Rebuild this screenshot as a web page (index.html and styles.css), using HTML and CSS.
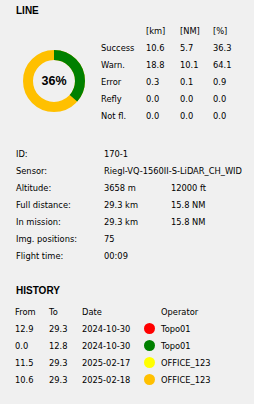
FILE: index.html
```html
<!DOCTYPE html>
<html lang="en">

<head>
    <meta charset="UTF-8">
    <meta name="viewport" content="width=device-width, initial-scale=1.0">
    <title>Line details</title>
    <link rel="stylesheet" href="styles.css">
</head>

<body>
    <div class="panel">
        <h2>LINE</h2>
        <div class="line-body">
            <div class="donut">
                <svg width="62" height="62" viewBox="0 0 62 62">
                    <g transform="rotate(-90 31 31)" fill="none" stroke-width="10">
                        <circle cx="31" cy="31" r="26" stroke="#ffc000"/>
                        <circle cx="31" cy="31" r="26" stroke="#008000" stroke-dasharray="59.3 200"/>
                        <circle cx="31" cy="31" r="26" stroke="#ff0000" stroke-dasharray="1.2 200" stroke-dashoffset="1.2"/>
                    </g>
                </svg>
                <span class="pct">36%</span>
            </div>
            <div class="stats">
                <span></span><span>[km]</span><span>[NM]</span><span>[%]</span>
                <span>Success</span><span>10.6</span><span>5.7</span><span>36.3</span>
                <span>Warn.</span><span>18.8</span><span>10.1</span><span>64.1</span>
                <span>Error</span><span>0.3</span><span>0.1</span><span>0.9</span>
                <span>Refly</span><span>0.0</span><span>0.0</span><span>0.0</span>
                <span>Not fl.</span><span>0.0</span><span>0.0</span><span>0.0</span>
            </div>
        </div>

        <!-- flight info -->
        <div class="info">
            <span>ID:</span><span class="wide">170-1</span>
            <span>Sensor:</span><span class="wide">Riegl-VQ-1560II-S-LiDAR_CH_WIDE</span>
            <span>Altitude:</span><span>3658 m</span><span>12000 ft</span>
            <span>Full distance:</span><span>29.3 km</span><span>15.8 NM</span>
            <span>In mission:</span><span>29.3 km</span><span>15.8 NM</span>
            <span>Img. positions:</span><span class="wide">75</span>
            <span>Flight time:</span><span class="wide">00:09</span>
        </div>

        <h2 class="history-title">HISTORY</h2>
        <div class="history">
            <span>From</span><span>To</span><span>Date</span><span></span><span>Operator</span>
            <span>12.9</span><span>29.3</span><span>2024-10-30</span><span class="dot red"></span><span>Topo01</span>
            <span>0.0</span><span>12.8</span><span>2024-10-30</span><span class="dot green"></span><span>Topo01</span>
            <span>11.5</span><span>29.3</span><span>2025-02-17</span><span class="dot yellow"></span><span>OFFICE_123</span>
            <span>10.6</span><span>29.3</span><span>2025-02-18</span><span class="dot orange"></span><span>OFFICE_123</span>
        </div>
    </div>
</body>

</html>
```

FILE: styles.css
```css
body {
    margin: 0;
    background-color: #f0f0f0;
    font-family: "DejaVu Sans", Tahoma, sans-serif;
    font-size: 8.3px;
    color: #000;
}

.panel {
    padding: 4px 12px 0 16px;
}

h2 {
    margin: 0;
    font-family: "Liberation Sans", Arial, sans-serif;
    font-size: 10px;
    font-weight: bold;
    line-height: 14px;
}

.line-body {
    display: flex;
    align-items: flex-end;
    margin-top: 4px;
}

.donut {
    position: relative;
    width: 62px;
    height: 62px;
    margin: 0 16px 12px 7px;
}

.donut svg {
    display: block;
}

.donut .pct {
    position: absolute;
    left: 0;
    top: 0;
    width: 62px;
    line-height: 62px;
    text-align: center;
    font-family: "Liberation Sans", Arial, sans-serif;
    font-size: 12.5px;
    font-weight: bold;
}

.stats {
    display: grid;
    grid-template-columns: 45px 34px 33px auto;
    grid-auto-rows: 17px;
    align-items: center;
}

.info {
    display: grid;
    grid-template-columns: 88px 67px 1fr;
    grid-auto-rows: 17px;
    align-items: center;
    margin-top: 21px;
}

.info .wide {
    grid-column: span 2;
    white-space: nowrap;
    overflow: hidden;
}

.history-title {
    margin-top: 20px;
}

.history {
    display: grid;
    grid-template-columns: 34px 33px 62px 17px 1fr;
    grid-auto-rows: 17px;
    align-items: center;
    margin-top: 5px;
    margin-left: -1px;
}

.dot {
    width: 11px;
    height: 11px;
    border-radius: 50%;
}

.red { background-color: #ff0000; }
.green { background-color: #008000; }
.yellow { background-color: #ffff00; }
.orange { background-color: #ffc000; }
```
